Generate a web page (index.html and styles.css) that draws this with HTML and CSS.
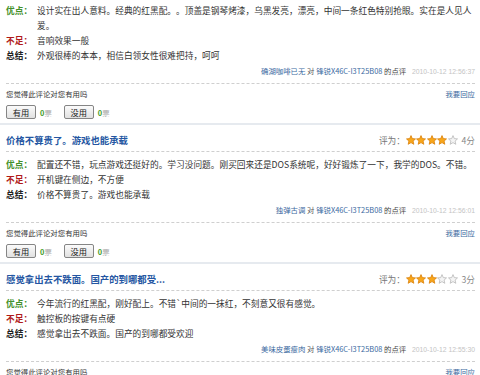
FILE: index.html
```html
<!DOCTYPE html>
<html>
<head>
<meta charset="utf-8">
<title>点评列表</title>
<link rel="stylesheet" href="styles.css">
</head>
<body>

<svg class="defs" width="0" height="0">
  <symbol id="star" viewBox="0 0 10 10">
    <polygon points="5,0.6 6.3,3.6 9.5,3.9 7.1,6.1 7.8,9.3 5,7.6 2.2,9.3 2.9,6.1 0.5,3.9 3.7,3.6"/>
  </symbol>
</svg>

<div id="reviews">

  <div class="review review-first">
    <div class="review-body">
      <div class="item"><span class="label good">优点：</span><span class="text">设计实在出人意料。经典的红黑配。。顶盖是钢琴烤漆，乌黑发亮，漂亮，中间一条红色特别抢眼。实在是人见人爱。</span></div>
      <div class="item"><span class="label bad">不足：</span><span class="text">音响效果一般</span></div>
      <div class="item"><span class="label sum">总结：</span><span class="text">外观很棒的本本，相信白领女性很难把持，呵呵</span></div>
      <div class="byline"><a class="user">确湖咖啡已无</a> <span class="to">对</span> <a class="product">锋锐X46C-I3T25B08</a> <span class="of">的点评</span> <span class="date">2010-10-12 12:56:37</span></div>
    </div>
    <div class="review-foot">
      <div class="foot-row"><span class="ask">您觉得此评论对您有用吗</span><a class="reply">我要回应</a></div>
      <div class="votes">
        <button class="vote-btn">有用</button><span class="count"><b>0</b>票</span>
        <button class="vote-btn">没用</button><span class="count"><b>0</b>票</span>
      </div>
    </div>
  </div>

  <div class="review">
    <div class="review-head">
      <span class="title">价格不算贵了。游戏也能承载</span>
      <span class="rating">评为：<span class="stars">
        <svg class="star on"><use href="#star"/></svg><svg class="star on"><use href="#star"/></svg><svg class="star on"><use href="#star"/></svg><svg class="star on"><use href="#star"/></svg><svg class="star"><use href="#star"/></svg>
      </span><span class="score">4分</span></span>
    </div>
    <div class="review-body">
      <div class="item"><span class="label good">优点：</span><span class="text">配置还不错，玩点游戏还挺好的。学习没问题。刚买回来还是DOS系统呢，好好锻炼了一下，我学的DOS。不错。</span></div>
      <div class="item"><span class="label bad">不足：</span><span class="text">开机键在侧边，不方便</span></div>
      <div class="item"><span class="label sum">总结：</span><span class="text">价格不算贵了。游戏也能承载</span></div>
      <div class="byline"><a class="user">独弹古调</a> <span class="to">对</span> <a class="product">锋锐X46C-I3T25B08</a> <span class="of">的点评</span> <span class="date">2010-10-12 12:56:01</span></div>
    </div>
    <div class="review-foot">
      <div class="foot-row"><span class="ask">您觉得此评论对您有用吗</span><a class="reply">我要回应</a></div>
      <div class="votes">
        <button class="vote-btn">有用</button><span class="count"><b>0</b>票</span>
        <button class="vote-btn">没用</button><span class="count"><b>0</b>票</span>
      </div>
    </div>
  </div>

  <div class="review">
    <div class="review-head">
      <span class="title">感觉拿出去不跌面。国产的到哪都受...</span>
      <span class="rating">评为：<span class="stars">
        <svg class="star on"><use href="#star"/></svg><svg class="star on"><use href="#star"/></svg><svg class="star on"><use href="#star"/></svg><svg class="star"><use href="#star"/></svg><svg class="star"><use href="#star"/></svg>
      </span><span class="score">3分</span></span>
    </div>
    <div class="review-body">
      <div class="item"><span class="label good">优点：</span><span class="text">今年流行的红黑配，刚好配上。不错`中间的一抹红，不刻意又很有感觉。</span></div>
      <div class="item"><span class="label bad">不足：</span><span class="text">触控板的按键有点硬</span></div>
      <div class="item"><span class="label sum">总结：</span><span class="text">感觉拿出去不跌面。国产的到哪都受欢迎</span></div>
      <div class="byline"><a class="user">美味皮蛋瘦肉</a> <span class="to">对</span> <a class="product">锋锐X46C-I3T25B08</a> <span class="of">的点评</span> <span class="date">2010-10-12 12:55:30</span></div>
    </div>
    <div class="review-foot">
      <div class="foot-row"><span class="ask">您觉得此评论对您有用吗</span><a class="reply">我要回应</a></div>
      <div class="votes">
        <button class="vote-btn">有用</button><span class="count"><b>0</b>票</span>
        <button class="vote-btn">没用</button><span class="count"><b>0</b>票</span>
      </div>
    </div>
  </div>

</div>

</body>
</html>
```

FILE: styles.css
```css
body {
  margin: 0;
  background-color: #fff;
  font-family: "Noto Sans CJK SC", "Liberation Sans", sans-serif;
  font-size: 8.7px;
  color: #333;
  text-spacing-trim: space-all;
  overflow: hidden;
}

.defs {
  position: absolute;
  width: 0;
  height: 0;
}

a {
  cursor: pointer;
}

.review {
  padding: 4px 5px 0 6px;
  border-bottom: 2px solid #e6eaef;
}

.review-first {
  padding-top: 0;
}

.review-head {
  display: flex;
  justify-content: space-between;
  align-items: center;
  height: 22px;
  border-bottom: 1px dashed #cfcfcf;
}

.title {
  font-size: 9.4px;
  font-weight: bold;
  color: #2456a2;
}

.rating {
  display: flex;
  align-items: center;
  color: #777;
}

.stars {
  display: flex;
  margin: 0 3px 0 1px;
}

.star {
  width: 10px;
  height: 10px;
  margin-right: 0.5px;
  fill: #f4f4f4;
  stroke: #b8b8b8;
  stroke-width: 0.8;
}

.star.on {
  fill: #f8a61a;
  stroke: #d97f08;
}

.score {
  color: #888;
}

.review-body {
  padding: 5px 0 4px;
  border-bottom: 1px dashed #cfcfcf;
  line-height: 15px;
}

.review-first .review-body {
  padding-top: 3px;
}

.item {
  display: grid;
  grid-template-columns: 31px 1fr;
}

.label {
  font-weight: bold;
}

.good {
  color: #43902a;
}

.bad {
  color: #b01a1a;
}

.sum {
  color: #222;
}

.byline {
  text-align: right;
  font-size: 7.4px;
  color: #555;
}

.user,
.product {
  color: #3c6a9f;
}

.of {
  color: #444;
}

.date {
  margin-left: 4px;
  font-family: "Liberation Sans", sans-serif;
  font-size: 6.8px;
  color: #c4c4c4;
}

.review-foot {
  padding: 3px 0 4px;
}

.foot-row {
  display: flex;
  justify-content: space-between;
  align-items: center;
  height: 12px;
  font-size: 7.4px;
}

.ask {
  color: #333;
}

.reply {
  color: #3c6a9f;
}

.votes {
  display: flex;
  align-items: center;
  margin-top: 6px;
  height: 14px;
}

.vote-btn {
  width: 30px;
  height: 14px;
  padding: 0;
  border: 1px solid #858585;
  border-radius: 2px;
  background: linear-gradient(#fbfbfb, #e1e1e1);
  font-family: inherit;
  font-size: 8.2px;
  line-height: 12px;
  color: #222;
}

.count {
  margin: 0 12px 0 4px;
  font-size: 7.4px;
  color: #aaa;
}

.count b {
  color: #3d9a22;
}
```
